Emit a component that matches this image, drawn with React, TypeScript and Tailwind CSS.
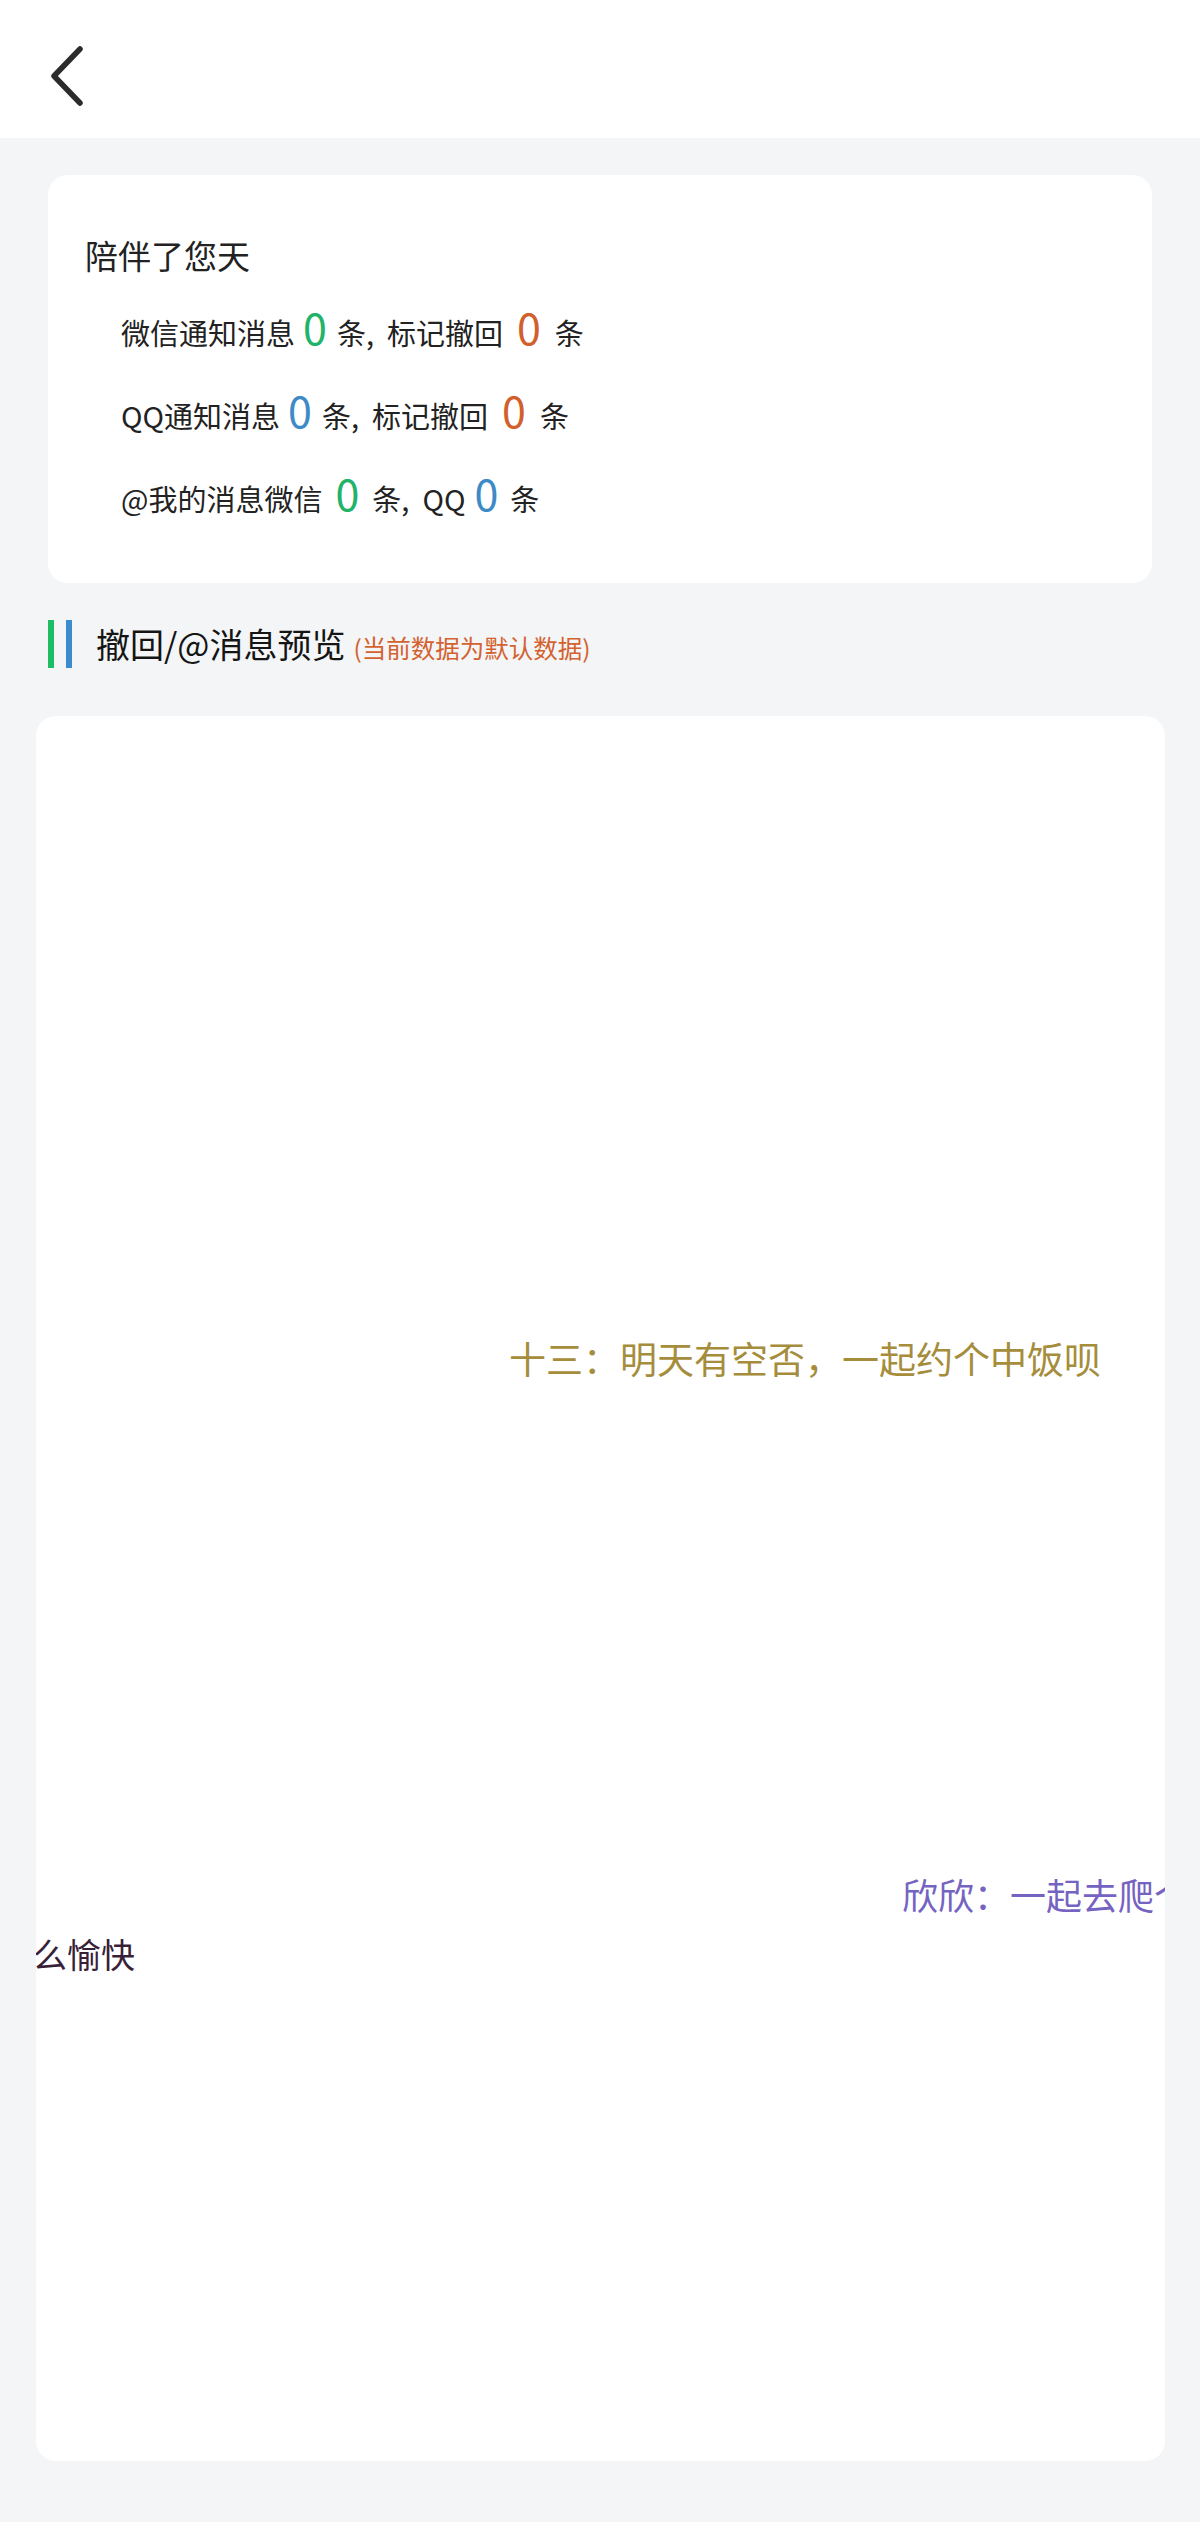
import React from "react";

const font = { fontFamily: '"Noto Sans CJK SC", "Noto Sans", sans-serif' };

function Num({ color, ml, mr }: { color: string; ml: string; mr: string }) {
  return (
    <span className={`inline-block text-[43px] ${color} ${ml} ${mr}`}>0</span>
  );
}

export default function App() {
  return (
    <div
      className="w-[1200px] min-h-[2522px] bg-[#f4f5f7] flex flex-col"
      style={font}
    >
      {/* Header */}
      <div className="h-[138px] bg-white flex items-start pt-[44px] pl-[50px] shrink-0">
        <svg width="34" height="62" viewBox="0 0 34 62" fill="none">
          <polyline
            points="30,5 4,32 30,59"
            stroke="#2b2b2b"
            strokeWidth="5.5"
            strokeLinecap="round"
            strokeLinejoin="round"
          />
        </svg>
      </div>

      {/* Stats card */}
      <div className="mx-[48px] mt-[37px] h-[408px] rounded-[20px] bg-white pl-[37px] pt-[58px] text-[#222]">
        <div className="h-[44px] flex items-center text-[33px] leading-none">
          陪伴了您天
        </div>
        <div className="pt-[8px] pl-[36px]">
          <div className="h-[83px] flex items-center">
            <span className="text-[29px] leading-none">
              微信通知消息
              <Num color="text-[#22b36a]" ml="ml-[8px]" mr="mr-[10px]" />
              条,<span className="ml-[13px]">标记撤回</span>
              <Num color="text-[#d1602c]" ml="ml-[14px]" mr="mr-[14px]" />
              条
            </span>
          </div>
          <div className="h-[83px] flex items-center">
            <span className="text-[29px] leading-none">
              QQ通知消息
              <Num color="text-[#3d8ac6]" ml="ml-[8px]" mr="mr-[10px]" />
              条,<span className="ml-[13px]">标记撤回</span>
              <Num color="text-[#d1602c]" ml="ml-[14px]" mr="mr-[14px]" />
              条
            </span>
          </div>
          <div className="h-[83px] flex items-center">
            <span className="text-[29px] leading-none">
              @我的消息微信
              <Num color="text-[#22b36a]" ml="ml-[13px]" mr="mr-[13px]" />
              条,<span className="ml-[13px]">QQ</span>
              <Num color="text-[#3d8ac6]" ml="ml-[9px]" mr="mr-[12px]" />
              条
            </span>
          </div>
        </div>
      </div>

      {/* Section header */}
      <div className="mt-[37px] ml-[48px] h-[48px] flex items-center">
        <div className="w-[6px] h-[48px] bg-[#1dbd62]" />
        <div className="w-[6px] h-[48px] bg-[#3b8bcf] ml-[12px]" />
        <div className="ml-[24px] flex items-baseline">
          <span className="text-[34px] leading-none text-[#151515]">撤回/@消息预览</span>
          <span className="ml-[8px] text-[24.5px] leading-none text-[#d3622f]">(当前数据为默认数据)</span>
        </div>
      </div>

      {/* Preview card (danmaku area) */}
      <div className="relative mt-[48px] ml-[36px] w-[1129px] h-[1745px] rounded-[20px] bg-white overflow-hidden">
        <div className="absolute left-[473px] top-[624px] whitespace-nowrap text-[37px] leading-[36px] text-[#a58d3c]">
          十三：明天有空否，一起约个中饭呗
        </div>
        <div className="absolute left-[866px] top-[1160px] whitespace-nowrap text-[36px] leading-[36px] text-[#7563c2]">
          欣欣：一起去爬个山吧
        </div>
        <div className="absolute left-[-3px] top-[1220px] whitespace-nowrap text-[34px] leading-[36px] text-[#3a1f38]">
          么愉快
        </div>
      </div>
    </div>
  );
}
